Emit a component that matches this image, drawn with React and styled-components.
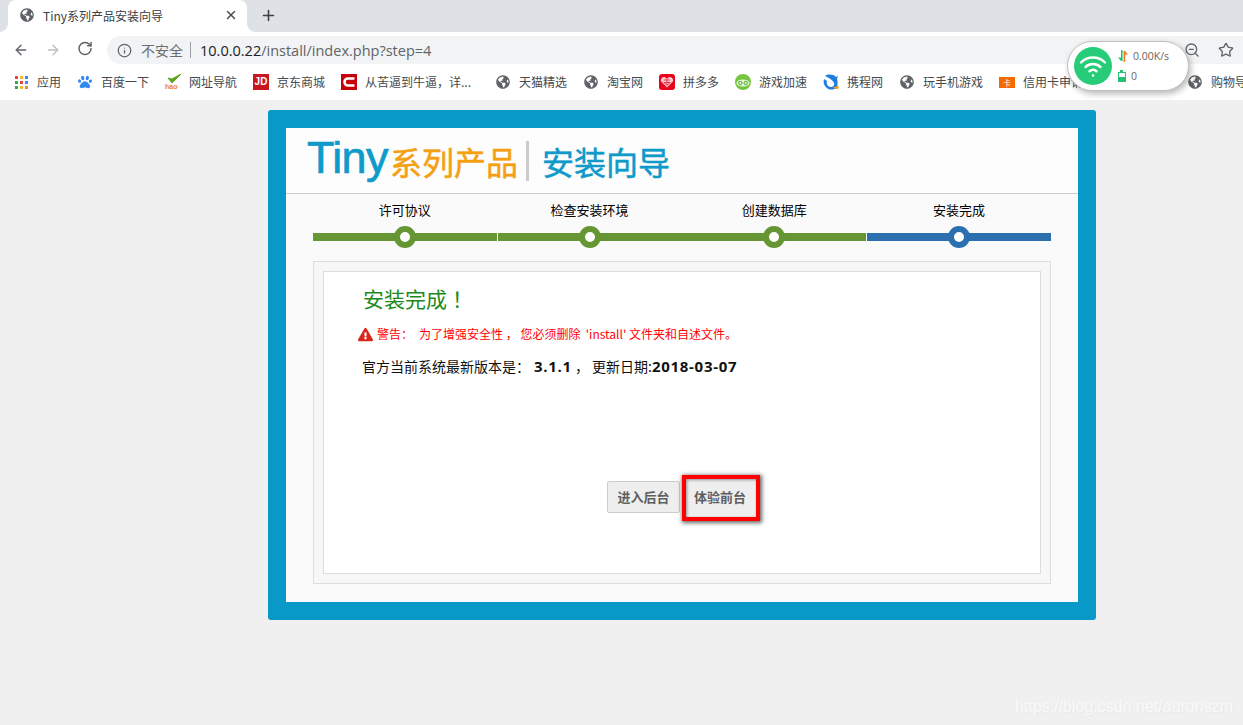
import React from "react";
import styled, { createGlobalStyle } from "styled-components";
import { ArrowLeft, ArrowRight, RotateCw, Info, Star, ZoomOut, X, Plus } from "lucide-react";
import { FaGlobeAmericas, FaPaw, FaExclamationTriangle } from "react-icons/fa";

const CJK = `"Noto Sans CJK SC", "Noto Sans", sans-serif`;

const Global = createGlobalStyle`
  html, body { margin: 0; padding: 0; background: #f0f0f0; }
  body { font-family: ${CJK}; overflow: hidden; }
  * { box-sizing: border-box; }
`;

const Page = styled.div`
  position: relative;
  width: 1243px;
  height: 725px;
  overflow: hidden;
  background: #f0f0f0;
`;

const TabStrip = styled.div`
  height: 32px;
  background: #dee1e6;
  display: flex;
  align-items: flex-end;
  padding-left: 8px;
`;

const Tab = styled.div`
  position: relative;
  width: 239px;
  height: 32px;
  background: #fff;
  border-radius: 8px 8px 0 0;
  display: flex;
  align-items: center;
  padding: 0 9px 2px 12px;
  color: #3c4043;
  font-size: 12px;
  &::before, &::after {
    content: "";
    position: absolute;
    bottom: 0;
    width: 8px;
    height: 8px;
  }
  &::before { left: -8px; background: radial-gradient(circle at 0 0, #dee1e6 7.5px, #fff 8px); }
  &::after { right: -8px; background: radial-gradient(circle at 100% 0, #dee1e6 7.5px, #fff 8px); }
`;

const TabTitle = styled.span`
  flex: 1;
  margin-left: 9px;
`;

const NewTab = styled.div`
  margin: 0 0 8px 13px;
  display: flex;
  color: #3c4043;
`;

const Toolbar = styled.div`
  height: 34px;
  background: #fff;
  display: flex;
  align-items: center;
  padding: 2px 0 0 13px;
`;

const NavGroup = styled.div`
  display: flex;
  gap: 16px;
  margin-right: 14px;
`;

const NavBtn = styled.div`
  width: 16px;
  display: flex;
  justify-content: center;
  color: ${p => (p.$off ? "#bcbfc4" : "#5f6368")};
`;

const Omnibox = styled.div`
  flex: 1;
  height: 28px;
  background: #f1f3f4;
  border-radius: 14px 0 0 14px;
  display: flex;
  align-items: center;
  padding: 0 9px 0 10px;
  color: #5f6368;
  font-size: 14px;
`;

const Insecure = styled.span`
  margin-left: 9px;
  font-size: 14px;
  color: #696d71;
`;

const OmniDivider = styled.span`
  width: 1px;
  height: 16px;
  background: #9aa0a6;
  margin: 0 9px 0 7px;
`;

const Url = styled.span`
  flex: 1;
  font-family: "Open Sans", sans-serif;
  font-size: 14.5px;
  color: #5f6368;
  b { font-weight: 400; color: #202124; }
`;

const OmniIcons = styled.div`
  display: flex;
  align-items: center;
  gap: 18px;
  color: #5f6368;
`;

const Bookmarks = styled.div`
  height: 34px;
  background: #fff;
  display: flex;
  align-items: center;
  gap: 16px;
  padding: 0 0 2px 13px;
  overflow: hidden;
  white-space: nowrap;
`;

const Mark = styled.div`
  display: flex;
  align-items: center;
  gap: 8px;
  flex: none;
`;

const MarkIcon = styled.div`
  width: 16px;
  height: 16px;
  display: flex;
  align-items: center;
  justify-content: center;
  flex: none;
`;

const MarkText = styled.span`
  font-size: 12px;
  line-height: 16px;
  color: #45494d;
  width: ${p => p.$w}px;
  overflow: hidden;
`;

const JdBadge = styled.div`
  width: 16px;
  height: 16px;
  background: #c9151e;
  color: #fff;
  font: 700 10px/16px "Liberation Sans", sans-serif;
  text-align: center;
`;

const HaoWrap = styled.div`
  position: relative;
  width: 17px;
  height: 16px;
  color: #e8842a;
  font: 700 7px/7px "Liberation Sans", sans-serif;
  display: flex;
  align-items: flex-end;
`;

const HaoTick = styled.svg`
  position: absolute;
  left: 2px;
  top: -1px;
`;

const CardBadge = styled.div`
  width: 16px;
  height: 11px;
  background: #f46a00;
  color: #fff;
  font-size: 8px;
  line-height: 11px;
  text-align: center;
`;

const Grid9 = styled.div`
  display: grid;
  grid-template-columns: repeat(3, 3px);
  gap: 2px;
`;

const Cell = styled.i`
  width: 3px;
  height: 3px;
  background: ${p => p.$c};
`;

const Main = styled.div`
  padding: 10px 0 0 268px;
`;

const Panel = styled.div`
  width: 828px;
  height: 510px;
  border: 18px solid #0899c9;
  border-radius: 3px;
  background: #fafafa;
  display: flex;
  flex-direction: column;
`;

const Header = styled.div`
  height: 66px;
  flex: none;
  background: #fdfdfd;
  border-bottom: 1px solid #ccc;
  display: flex;
  align-items: center;
  padding-left: 21px;
`;

const LogoTiny = styled.span`
  font-family: "Liberation Sans", sans-serif;
  font-size: 45px;
  letter-spacing: -0.6px;
  line-height: 56px;
  color: #0f9aca;
  margin: -5px 2px 0 0;
  -webkit-text-stroke: 0.7px #0f9aca;
`;

const LogoText = styled.span`
  font-size: 32px;
  line-height: 40px;
  margin-top: 1px;
  color: ${p => p.$c};
  -webkit-text-stroke: 0.5px ${p => p.$c};
`;

const LogoBar = styled.span`
  width: 3px;
  height: 40px;
  background: #ccc;
  margin: 0 13px 0 8px;
`;

const Steps = styled.div`
  margin: 0 27px;
  display: grid;
  grid-template-columns: repeat(4, 1fr);
  gap: 1px;
  flex: none;
`;

const Step = styled.div`
  display: flex;
  flex-direction: column;
  align-items: center;
`;

const StepLabel = styled.div`
  height: 39px;
  padding-top: 7px;
  font-size: 13px;
  line-height: 18px;
  color: #000;
`;

const Track = styled.div`
  width: 100%;
  height: 8px;
  background: ${p => p.$c};
  box-shadow: ${p => (p.$joined ? `-1px 0 0 ${p.$c}` : "none")};
  display: flex;
  align-items: center;
  justify-content: center;
`;

const Dot = styled.div`
  width: 22px;
  height: 22px;
  flex: none;
  border-radius: 50%;
  border: 6px solid ${p => p.$c};
  background: #fff;
`;

const OuterBox = styled.div`
  margin: 20px 27px 0;
  height: 323px;
  padding: 9px;
  border: 1px solid #ddd;
  background: #f7f7f7;
  display: flex;
`;

const InnerBox = styled.div`
  flex: 1;
  border: 1px solid #ddd;
  background: #fff;
  display: flex;
  flex-direction: column;
  padding: 10px 34px 60px;
`;

const Title = styled.h2`
  margin: 0 0 0 5px;
  font-weight: 400;
  font-size: 21px;
  line-height: 32px;
  color: #1d8a1d;
`;

const Bang = styled.span`
  margin-left: 5px;
`;

const Warn = styled.div`
  margin-top: 10px;
  display: flex;
  align-items: center;
  font-size: 12px;
  line-height: 20px;
  color: #f00;
  white-space: pre;
`;

const WarnLabel = styled.span`
  margin: 0 6px 0 4px;
`;

const Version = styled.div`
  margin: 12px 0 0 4px;
  font-size: 14px;
  line-height: 20px;
  color: #111;
`;

const Strong = styled.b`
  font-size: 15px;
  font-family: "Open Sans", sans-serif;
  font-weight: 700;
  letter-spacing: 0.7px;
  margin-left: ${p => p.$ml || 0}px;
`;

const Actions = styled.div`
  margin-top: auto;
  display: flex;
  justify-content: center;
  gap: 3px;
`;

const Button = styled.div`
  position: relative;
  width: ${p => p.$w}px;
  height: 32px;
  background: #eee;
  border: 1px solid ${p => (p.$marked ? "#eee" : "#ccc")};
  border-radius: 2px;
  color: #5f5f5f;
  font-size: 13px;
  font-weight: 700;
  line-height: 29px;
  text-align: center;
  box-shadow: ${p => (p.$marked ? "0 -3px 0 #eee, 0 5px 0 #eee" : "none")};
  &::after {
    content: "";
    display: ${p => (p.$marked ? "block" : "none")};
    position: absolute;
    inset: -7px -4px -9px -2px;
    border: 4px solid #f00;
    box-shadow: 1px 1px 4px 1px rgba(0, 0, 0, 0.6), inset 1px 1px 3px rgba(0, 0, 0, 0.4);
  }
`;

const Widget = styled.div`
  position: absolute;
  left: 1067px;
  top: 41px;
  width: 122px;
  height: 50px;
  background: #fff;
  border: 1px solid #c0c0c0;
  border-radius: 25px;
  box-shadow: 2px 3px 6px rgba(0, 0, 0, 0.28);
  display: flex;
  align-items: center;
  padding-left: 6px;
`;

const WifiCircle = styled.div`
  width: 38px;
  height: 38px;
  border-radius: 50%;
  background: #26cc78;
  display: flex;
  align-items: center;
  justify-content: center;
  flex: none;
`;

const Stats = styled.div`
  margin-left: 6px;
  display: flex;
  flex-direction: column;
  gap: 4px;
`;

const Stat = styled.div`
  display: flex;
  align-items: center;
  gap: 5px;
  height: 16px;
  font: 10.5px/16px "Open Sans", sans-serif;
  color: #666;
`;

const Watermark = styled.div`
  position: absolute;
  right: 10px;
  bottom: 8px;
  font: 16px/20px "Liberation Sans", sans-serif;
  color: #f9f9f9;
  text-shadow: 1px 1px 1px #e9e9e9;
`;

const Globe = () => <FaGlobeAmericas size={14} color="#5f6368" />;

const AppsIcon = () => (
  <Grid9>
    {["#e8453c", "#f9bb2d", "#4285f4", "#3aa757", "#e8453c", "#4285f4", "#3aa757", "#f9bb2d", "#f28b1e"].map((c, i) => (
      <Cell key={i} $c={c} />
    ))}
  </Grid9>
);

const HaoIcon = () => (
  <HaoWrap>
    <HaoTick width="15" height="11" viewBox="0 0 15 11">
      <path d="M1 5l4 5L14 1 5 6z" fill="#5aa61e" stroke="#5aa61e" strokeWidth="1" />
    </HaoTick>
    hao
  </HaoWrap>
);

const CIcon = () => (
  <svg width="16" height="16" viewBox="0 0 16 16">
    <rect width="16" height="16" fill="#c8000a" />
    <path d="M13.5 4.5H7a3.5 3.5 0 0 0 0 7h6.5" fill="none" stroke="#fff" strokeWidth="2.6" />
  </svg>
);

const PddIcon = () => (
  <svg width="16" height="16" viewBox="0 0 16 16">
    <rect width="16" height="16" rx="3" fill="#e8041c" />
    <path d="M8 13.5L2.8 8.2a3 3 0 0 1 4.4-4.1L8 5l.8-.9a3 3 0 0 1 4.4 4.1z" fill="#ffc9d0" />
    <path d="M8 11.5L4.5 8M8 11.5L11.5 8M5 6h6M5 8.5h6M8 5v6" stroke="#e8041c" strokeWidth=".7" />
  </svg>
);

const GameIcon = () => (
  <svg width="16" height="16" viewBox="0 0 16 16">
    <circle cx="8" cy="8" r="8" fill="#74c63f" />
    <ellipse cx="8" cy="9" rx="6.5" ry="3.6" fill="#e6f6d8" />
    <circle cx="5.3" cy="9" r="1.7" fill="none" stroke="#4da52a" strokeWidth="1" />
    <circle cx="10.7" cy="9" r="1.7" fill="none" stroke="#4da52a" strokeWidth="1" />
  </svg>
);

const CtripIcon = () => (
  <svg width="16" height="16" viewBox="0 0 16 16">
    <path d="M2 2c3-2 8-2 11 1l2-1-1 3c1 3 1 7-1 9-3 2-7 2-9 0-3-2-4-6-3-9l3 2c-1 3 1 6 4 6 2 0 4-2 3-4-1-3-5-5-9-7z" fill="#1e7fe0" />
    <path d="M10 13c2 0 4 0 5-2l1 3c-2 2-4 1-6-1z" fill="#f2a01e" />
  </svg>
);

const WifiGlyph = () => (
  <svg width="28" height="24" viewBox="0 0 28 24" fill="none" stroke="#fff" strokeLinecap="round" strokeWidth="2.4">
    <path d="M2 8.5a17 17 0 0 1 24 0" />
    <path d="M6.5 13a11 11 0 0 1 15 0" />
    <path d="M10.5 17.2a5.5 5.5 0 0 1 7 0" />
    <circle cx="14" cy="21.5" r="1.3" fill="#fff" stroke="none" />
  </svg>
);

const Arrows = () => (
  <svg width="10" height="12" viewBox="0 0 10 12">
    <path d="M3 0h1.6v11H3L0 7.5h3z" fill="#26c074" />
    <path d="M5.6 1h1.6L10 4.5H7.2V12H5.6z" fill="#f27a1a" />
  </svg>
);

const SimIcon = () => (
  <svg width="8" height="12" viewBox="0 0 8 12">
    <path d="M2 0h3v2h3v10H0V2h2z" fill="#26c074" />
    <rect x="1" y="3" width="6" height="4" fill="#fff" />
  </svg>
);

const marks = [
  { icon: <AppsIcon />, text: "应用", w: 24 },
  { icon: <FaPaw size={14} color="#3388ee" />, text: "百度一下", w: 48 },
  { icon: <HaoIcon />, text: "网址导航", w: 48 },
  { icon: <JdBadge>JD</JdBadge>, text: "京东商城", w: 48 },
  { icon: <CIcon />, text: "从苦逼到牛逼，详...", w: 114 },
  { icon: <Globe />, text: "天猫精选", w: 48 },
  { icon: <Globe />, text: "淘宝网", w: 36 },
  { icon: <PddIcon />, text: "拼多多", w: 36 },
  { icon: <GameIcon />, text: "游戏加速", w: 48 },
  { icon: <CtripIcon />, text: "携程网", w: 36 },
  { icon: <Globe />, text: "玩手机游戏", w: 60 },
  { icon: <CardBadge>卡</CardBadge>, text: "信用卡申请", w: 148 },
  { icon: <Globe />, text: "购物导航", w: 48 },
];

const steps = [
  { label: "许可协议", c: "#669533" },
  { label: "检查安装环境", c: "#669533" },
  { label: "创建数据库", c: "#669533", joined: true },
  { label: "安装完成", c: "#2a6fae" },
];

export default function App() {
  return (
    <Page>
      <Global />
      <TabStrip>
        <Tab>
          <FaGlobeAmericas size={14} color="#5f6368" />
          <TabTitle>Tiny系列产品安装向导</TabTitle>
          <X size={14} strokeWidth={2.4} color="#45494d" />
        </Tab>
        <NewTab><Plus size={17} strokeWidth={2.2} /></NewTab>
      </TabStrip>
      <Toolbar>
        <NavGroup>
          <NavBtn><ArrowLeft size={20} strokeWidth={2.1} /></NavBtn>
          <NavBtn $off><ArrowRight size={20} strokeWidth={2.1} /></NavBtn>
          <NavBtn><RotateCw size={17} strokeWidth={2.2} /></NavBtn>
        </NavGroup>
        <Omnibox>
          <Info size={15} strokeWidth={2} />
          <Insecure>不安全</Insecure>
          <OmniDivider />
          <Url><b>10.0.0.22</b>/install/index.php?step=4</Url>
          <OmniIcons>
            <ZoomOut size={16} strokeWidth={2} />
            <Star size={16} strokeWidth={2} />
          </OmniIcons>
        </Omnibox>
      </Toolbar>
      <Bookmarks>
        {marks.map(m => (
          <Mark key={m.text}>
            <MarkIcon>{m.icon}</MarkIcon>
            <MarkText $w={m.w}>{m.text}</MarkText>
          </Mark>
        ))}
      </Bookmarks>
      <Main>
        <Panel>
          <Header>
            <LogoTiny>Tiny</LogoTiny>
            <LogoText $c="#f5a012">系列产品</LogoText>
            <LogoBar />
            <LogoText $c="#0f9aca">安装向导</LogoText>
          </Header>
          <Steps>
            {steps.map(s => (
              <Step key={s.label}>
                <StepLabel>{s.label}</StepLabel>
                <Track $c={s.c} $joined={s.joined}><Dot $c={s.c} /></Track>
              </Step>
            ))}
          </Steps>
          <OuterBox>
            <InnerBox>
              <Title>安装完成<Bang>！</Bang></Title>
              <Warn>
                <FaExclamationTriangle size={15} color="#d9261c" />
                <WarnLabel>警告：</WarnLabel>
                {"为了增强安全性 ， 您必须删除  'install' 文件夹和自述文件。"}
              </Warn>
              <Version>
                官方当前系统最新版本是：<Strong $ml={4}>3.1.1</Strong> ， 更新日期:<Strong>2018-03-07</Strong>
              </Version>
              <Actions>
                <Button $w={73}>进入后台</Button>
                <Button $w={74} $marked>体验前台</Button>
              </Actions>
            </InnerBox>
          </OuterBox>
        </Panel>
      </Main>
      <Widget>
        <WifiCircle><WifiGlyph /></WifiCircle>
        <Stats>
          <Stat><Arrows />0.00K/s</Stat>
          <Stat><SimIcon />0</Stat>
        </Stats>
      </Widget>
      <Watermark>https://blog.csdn.net/aaronszm</Watermark>
    </Page>
  );
}
